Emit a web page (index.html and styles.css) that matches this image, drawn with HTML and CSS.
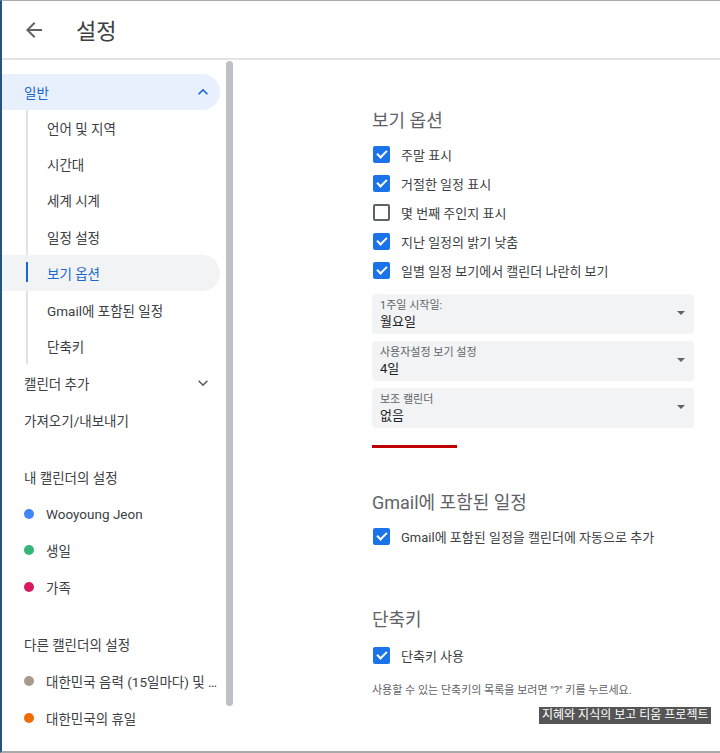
FILE: index.html
```html
<!DOCTYPE html>
<html lang="ko">
<head>
    <meta charset="UTF-8">
    <meta name="viewport" content="width=device-width, initial-scale=1.0">
    <title>설정</title>
    <link rel="stylesheet" href="styles.css">
</head>
<body>
    <div class="frame">
        <header class="topbar">
            <button class="back-button" aria-label="뒤로">
                <svg width="24" height="24" viewBox="0 0 24 24"><path d="M20 11H7.83l5.59-5.59L12 4l-8 8 8 8 1.41-1.41L7.83 13H20v-2z" fill="#5f6368"/></svg>
            </button>
            <h1 class="page-title">설정</h1>
        </header>
        <div class="main">
            <nav class="sidebar">
                <div class="nav-list">
                    <div class="nav-item nav-group open">
                        <span>일반</span>
                        <svg class="chevron" width="20" height="20" viewBox="0 0 24 24"><path d="M12 8l-6 6 1.41 1.41L12 10.83l4.59 4.58L18 14z" fill="#1967d2"/></svg>
                    </div>
                    <div class="sub-list">
                        <div class="nav-item sub">언어 및 지역</div>
                        <div class="nav-item sub">시간대</div>
                        <div class="nav-item sub">세계 시계</div>
                        <div class="nav-item sub">일정 설정</div>
                        <div class="nav-item sub active">보기 옵션</div>
                        <div class="nav-item sub">Gmail에 포함된 일정</div>
                        <div class="nav-item sub">단축키</div>
                    </div>
                    <div class="nav-item nav-group">
                        <span>캘린더 추가</span>
                        <svg class="chevron" width="20" height="20" viewBox="0 0 24 24"><path d="M16.59 8.59L12 13.17 7.41 8.59 6 10l6 6 6-6z" fill="#5f6368"/></svg>
                    </div>
                    <div class="nav-item">가져오기/내보내기</div>

                    <div class="nav-heading">내 캘린더의 설정</div>
                    <div class="nav-item cal"><span class="dot dot-blue"></span>Wooyoung Jeon</div>
                    <div class="nav-item cal"><span class="dot dot-green"></span>생일</div>
                    <div class="nav-item cal"><span class="dot dot-pink"></span>가족</div>

                    <div class="nav-heading">다른 캘린더의 설정</div>
                    <div class="nav-item cal"><span class="dot dot-gray"></span><span class="ellipsis">대한민국 음력 (15일마다) 및 절기</span></div>
                    <div class="nav-item cal"><span class="dot dot-orange"></span>대한민국의 휴일</div>
                </div>
                <div class="scrollbar"><div class="thumb"></div></div>
            </nav>

            <section class="content">
                <div class="panel">
                    <h2 class="section-title first">보기 옵션</h2>
                    <label class="check-row"><span class="box checked"></span>주말 표시</label>
                    <label class="check-row"><span class="box checked"></span>거절한 일정 표시</label>
                    <label class="check-row"><span class="box"></span>몇 번째 주인지 표시</label>
                    <label class="check-row"><span class="box checked"></span>지난 일정의 밝기 낮춤</label>
                    <label class="check-row"><span class="box checked"></span>일별 일정 보기에서 캘린더 나란히 보기</label>

                    <div class="select-list">
                        <div class="select">
                            <div class="select-text">
                                <div class="select-label">1주일 시작일:</div>
                                <div class="select-value">월요일</div>
                            </div>
                            <span class="caret"></span>
                        </div>
                        <div class="select">
                            <div class="select-text">
                                <div class="select-label">사용자설정 보기 설정</div>
                                <div class="select-value">4일</div>
                            </div>
                            <span class="caret"></span>
                        </div>
                        <div class="select">
                            <div class="select-text">
                                <div class="select-label">보조 캘린더</div>
                                <div class="select-value">없음</div>
                            </div>
                            <span class="caret"></span>
                        </div>
                    </div>
                    <div class="red-bar"></div>

                    <h2 class="section-title gmail">Gmail에 포함된 일정</h2>
                    <label class="check-row"><span class="box checked"></span>Gmail에 포함된 일정을 캘린더에 자동으로 추가</label>

                    <h2 class="section-title shortcut">단축키</h2>
                    <label class="check-row"><span class="box checked"></span>단축키 사용</label>
                    <p class="help">사용할 수 있는 단축키의 목록을 보려면 "?" 키를 누르세요.</p>
                </div>
            </section>
        </div>
        <div class="watermark">지혜와 지식의 보고 티움 프로젝트</div>
    </div>
</body>
</html>
```

FILE: styles.css
```css
html, body {
    margin: 0;
    padding: 0;
}
body {
    font-family: Roboto, "Noto Sans CJK KR", sans-serif;
    color: #3c4043;
    background: #fff;
}
.frame {
    position: relative;
    width: 720px;
    height: 753px;
    box-sizing: border-box;
    border-top: 1px solid #aaaaaa;
    border-left: 2px solid #24557e;
    border-bottom: 2px solid #a8a8a8;
    overflow: hidden;
    display: flex;
    flex-direction: column;
}
.topbar {
    height: 59px;
    flex-shrink: 0;
    display: flex;
    align-items: center;
    border-bottom: 2px solid #e3e3e3;
    box-sizing: border-box;
}
.back-button {
    width: 24px;
    height: 24px;
    padding: 0;
    margin: 0 0 0 20px;
    border: none;
    background: none;
    display: flex;
    cursor: pointer;
}
.page-title {
    margin: 0 0 2px 30px;
    font-size: 22px;
    font-weight: 400;
    color: #3c4043;
}
.main {
    flex: 1;
    display: flex;
    min-height: 0;
}
.sidebar {
    width: 238px;
    flex-shrink: 0;
    display: flex;
    overflow: hidden;
}
.nav-list {
    width: 218px;
    padding-top: 14px;
    font-size: 13.5px;
}
.nav-item {
    height: 36.4px;
    display: flex;
    align-items: center;
    padding-left: 22px;
    white-space: nowrap;
    border-radius: 0 18px 18px 0;
    position: relative;
}
.nav-group {
    justify-content: space-between;
    padding-right: 7px;
}
.nav-group.open {
    background: #e8f0fe;
    color: #1967d2;
}
.sub-list {
    margin-left: 24px;
    border-left: 2px solid #e3e3e3;
    margin-top: -1px;
    margin-bottom: 1px;
}
.nav-item.sub {
    margin-left: -26px;
    padding-left: 45px;
}
.nav-item.sub.active {
    background: #f1f3f4;
    color: #1967d2;
}
.nav-item.sub.active::before {
    content: "";
    position: absolute;
    left: 24px;
    top: 7px;
    width: 2px;
    height: 20px;
    background: #1967d2;
}
.nav-heading {
    height: 36px;
    display: flex;
    align-items: center;
    padding-left: 22px;
    margin-top: 21px;
}
.nav-item.cal {
    padding-left: 22px;
}
.nav-heading + .nav-item.cal {
    margin-top: 1px;
}
.dot {
    width: 10px;
    height: 10px;
    border-radius: 50%;
    margin-right: 12px;
    flex-shrink: 0;
}
.dot-blue { background: #4285f4; }
.dot-green { background: #33b679; }
.dot-pink { background: #d81b60; }
.dot-gray { background: #a79b8e; }
.dot-orange { background: #ef6c00; }
.ellipsis {
    overflow: hidden;
    text-overflow: ellipsis;
    max-width: 176px;
}
.scrollbar {
    width: 20px;
    display: flex;
    justify-content: center;
    padding-top: 1px;
}
.thumb {
    width: 7px;
    height: 645px;
    margin-left: -2px;
    background: #bdc1c6;
    border-radius: 4px;
}
.content {
    flex: 1;
    overflow: hidden;
}
.panel {
    width: 322px;
    margin-left: 132px;
}
.section-title {
    margin: 0;
    font-size: 18px;
    font-weight: 400;
    line-height: 24px;
    color: #5f6368;
    margin-bottom: 7px;
}
.section-title.first {
    margin-top: 49px;
}
.section-title.gmail {
    margin-top: 43px;
}
.section-title.shortcut {
    margin-top: 57px;
    margin-bottom: 9px;
}
.check-row {
    display: flex;
    align-items: center;
    height: 29px;
    font-size: 13px;
    color: #3c4043;
}
.box {
    width: 13px;
    height: 13px;
    border: 2px solid #5f6368;
    border-radius: 2px;
    margin-left: 1px;
    margin-right: 11px;
    position: relative;
    flex-shrink: 0;
}
.box.checked {
    background: #1a73e8;
    border-color: #1a73e8;
}
.box.checked::after {
    content: "";
    position: absolute;
    left: 4px;
    top: 0px;
    width: 4px;
    height: 8px;
    border: solid #fff;
    border-width: 0 2px 2px 0;
    transform: rotate(45deg);
}
.select-list {
    display: flex;
    flex-direction: column;
    gap: 7px;
    margin-top: 9px;
}
.select {
    height: 40px;
    background: #f1f3f4;
    border-radius: 4px;
    display: flex;
    align-items: center;
    justify-content: space-between;
    padding: 0 8px 0 8px;
}
.select-label {
    font-size: 11px;
    line-height: 14px;
    color: #5f6368;
}
.select-value {
    font-size: 13px;
    line-height: 17px;
    color: #202124;
}
.caret {
    width: 0;
    height: 0;
    border-left: 4px solid transparent;
    border-right: 4px solid transparent;
    border-top: 4px solid #5f6368;
    margin-right: 1px;
    margin-bottom: 3px;
}
.red-bar {
    width: 85px;
    height: 3px;
    background: #c00000;
    margin-top: 17px;
}
.help {
    margin: 13px 0 0;
    font-size: 11px;
    line-height: 16px;
    color: #5f6368;
    white-space: nowrap;
}
.watermark {
    position: absolute;
    left: 537px;
    top: 706px;
    height: 17px;
    padding: 0 3px;
    background: #555555;
    color: #fff;
    font-size: 12px;
    line-height: 17px;
    white-space: nowrap;
}
```
